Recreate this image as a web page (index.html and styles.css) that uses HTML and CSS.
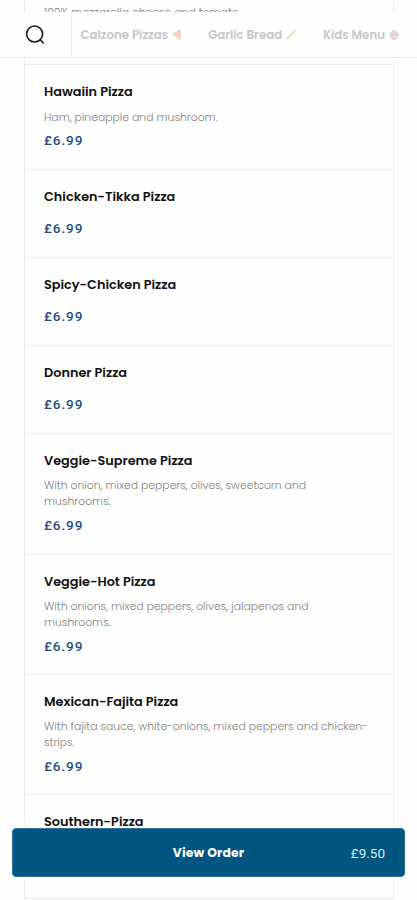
FILE: index.html
```html
<!DOCTYPE html>
<html lang="en">
<head>
<meta charset="utf-8">
<meta name="viewport" content="width=device-width">
<title>Pizza menu</title>
<link rel="stylesheet" href="styles.css">
</head>
<body>
<main class="menu">
  <article class="item first"><p class="desc">100% mozzarella cheese and tomato.</p></article>
  <article class="item"><h2>Hawaiin Pizza</h2><p class="desc">Ham, pineapple and mushroom.</p><p class="price">£6.99</p></article>
  <article class="item plain"><h2>Chicken-Tikka Pizza</h2><p class="price">£6.99</p></article>
  <article class="item plain"><h2>Spicy-Chicken Pizza</h2><p class="price">£6.99</p></article>
  <article class="item plain"><h2>Donner Pizza</h2><p class="price">£6.99</p></article>
  <article class="item tall more"><h2>Veggie-Supreme Pizza</h2><p class="desc">With onion, mixed peppers, olives, sweetcorn and<br>mushrooms.</p><p class="price">£6.99</p></article>
  <article class="item tall"><h2>Veggie-Hot Pizza</h2><p class="desc">With onions, mixed peppers, olives, jalapenos and<br>mushrooms.</p><p class="price">£6.99</p></article>
  <article class="item tall"><h2>Mexican-Fajita Pizza</h2><p class="desc">With fajita sauce, white-onions, mixed peppers and chicken-<br>strips.</p><p class="price">£6.99</p></article>
  <article class="item last"><h2>Southern-Pizza</h2></article>
</main>

<header class="bar">
  <button class="search" aria-label="Search">
    <svg width="20" height="20" viewBox="0 0 20 20" fill="none" stroke="#1c1c1c" stroke-width="1.6" stroke-linecap="round"><circle cx="9.6" cy="9" r="8"/><path d="M15.2 14.8 18.4 18"/></svg>
  </button>
  <nav class="tabs">
    <a class="tab">Calzone Pizzas
      <svg width="11" height="12" viewBox="0 0 11 12"><path d="M.5 5 8.5 1 8.4 10.5Z" fill="#fbd5bb"/><path d="M8 .7Q10 5 8.6 11" fill="none" stroke="#f2cab2" stroke-width="1.5"/><circle cx="5" cy="4.6" r="1.1" fill="#f7c3ae"/><circle cx="7" cy="7.2" r=".9" fill="#f7c3ae"/></svg></a>
    <a class="tab">Garlic Bread
      <svg width="12" height="12" viewBox="0 0 12 12" fill="none" stroke-linecap="round"><path d="M2.4 9.5 10 2" stroke="#f4ebc2" stroke-width="2.5"/><path d="M2 8.8 7.5 3.6" stroke="#e2ded6" stroke-width="1"/></svg></a>
    <a class="tab">Kids Menu
      <svg width="12" height="12" viewBox="0 0 12 12"><path d="M6 .8Q10 2 11.2 6 10 10.6 6 11.2 2 10.6.8 6 2 2 6 .8Z" fill="#e8dcde"/><path d="M2.5 6.5h7M4 9.3h4" fill="none" stroke="#dfd0d3"/><circle cx="4.2" cy="5" r=".7" fill="#d4c6c9"/><circle cx="7.8" cy="5" r=".7" fill="#d4c6c9"/></svg></a>
  </nav>
</header>

<button class="order"><span></span><strong>View Order</strong><span class="total">£9.50</span></button>
</body>
</html>
```
FILE: styles.css
```css
* { box-sizing: border-box; }
body {
  margin: 0;
  height: 900px;
  overflow: hidden;
  background: #fefefe;
  color: #111;
  font-family: Poppins, Inter, "Liberation Sans", sans-serif;
}
h2, p { margin: 0; }
.menu {
  width: 370px;
  margin-left: 24px;
  border: solid #ededed;
  border-width: 0 1px;
}
.item {
  height: 105px;
  padding: 17px 19px 0;
  border-bottom: 1px solid #ededed;
}
.item.first { height: 65px; padding-top: 5px; }
.item.plain { height: 88px; }
.item.plain .price { margin-top: 13px; }
.item.tall { height: 120px; }
.item.more { height: 121px; }
.item.last { height: 104px; }
h2 {
  font-size: 12.85px;
  font-weight: 600;
  line-height: 20px;
  white-space: nowrap;
}
.desc {
  margin-top: 8px;
  font-size: 10.84px;
  font-weight: 300;
  line-height: 16px;
  color: #808080;
  white-space: nowrap;
}
.tall .desc { margin-top: 7px; }
.tall .price { margin-top: 7px; }
.first .desc { margin-top: 0; }
.price {
  margin-top: 6px;
  font-family: Roboto, "Liberation Sans", sans-serif;
  font-size: 13.5px;
  font-weight: 500;
  line-height: 17px;
  letter-spacing: .9px;
  color: #1c4f83;
}
.bar {
  position: fixed;
  top: 12px;
  left: 0;
  width: 100%;
  height: 46px;
  display: flex;
  background: #fefefe;
  border-bottom: 1px solid #e9e9e9;
}
.search {
  width: 72px;
  padding: 0 0 0 25px;
  border: 0;
  border-right: 1px solid #ededed;
  background: none;
  display: flex;
  align-items: center;
}
.tabs { display: flex; align-items: center; padding: 1px 0 0 8.5px; gap: 26px; }
.tab {
  display: flex;
  align-items: center;
  gap: 3px;
  font-size: 11.8px;
  font-weight: 600;
  color: #c6c6c6;
  white-space: nowrap;
}
.order {
  position: fixed;
  left: 12px;
  top: 828px;
  width: 393px;
  height: 49px;
  padding: 0 19px;
  display: grid;
  grid-template-columns: 1fr auto 1fr;
  align-items: center;
  border: 1px solid #2d7199;
  border-radius: 4px;
  background: #005581;
  color: #fff;
  font-family: inherit;
  font-size: 12.3px;
}
.order strong { font-weight: 700; letter-spacing: .2px; }
.total {
  text-align: right;
  color: #dce8ef;
  font-family: Roboto, "Liberation Sans", sans-serif;
  font-size: 13.5px;
}
```
